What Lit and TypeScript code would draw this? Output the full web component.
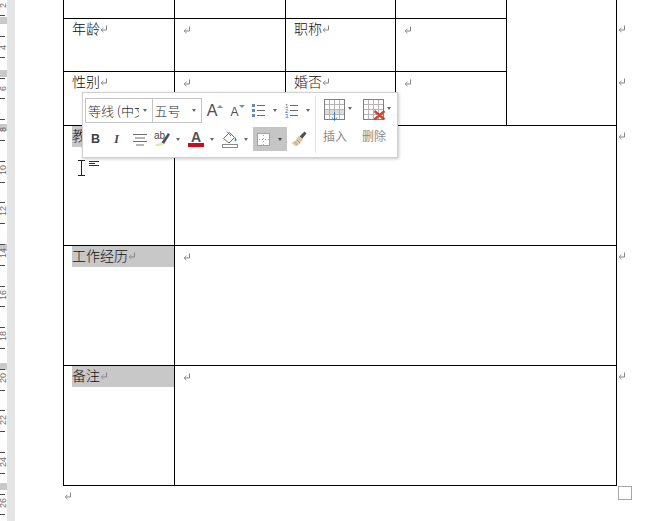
import { LitElement, html, css, svg } from "lit";
import { customElement } from "lit/decorators.js";

const TICKS = Array.from({ length: 25 }, (_, i) => Math.round(15.2 + 20.8 * i));
const NUMBERS: [string, number][] = [
  ["2", 5], ["4", 47], ["6", 88], ["8", 129], ["10", 170], ["12", 211], ["14", 253],
  ["16", 295], ["18", 336], ["20", 378], ["22", 420], ["24", 462], ["26", 503],
];
const BLOCKS = [17, 70, 124, 244, 363, 483];

const mark = html`<svg class="mark" width="8" height="8" viewBox="0 0 8 8"><path d="M6.5 0.5V5H1.5" fill="none" stroke="#858585" stroke-width="1"/><path d="M3.5 2.8L1 5L3.5 7.2" fill="none" stroke="#999" stroke-width="1"/></svg>`;

const tableGrid = (fill: boolean) => svg`
  ${fill ? svg`<rect x="0" y="10.5" width="20" height="5" fill="#d9dedf"/>` : ""}
  <path d="M5.5 .5V20.5M10.5 .5V20.5M15.5 .5V20.5M.5 5.5H20.5M.5 10.5H20.5M.5 15.5H20.5" stroke="#b4b4b4" fill="none"/>
  <rect x=".5" y=".5" width="20" height="20" fill="none" stroke="#808080"/>`;

@customElement("app-root")
export class AppRoot extends LitElement {
  static styles = css`
    :host { display: block; width: 656px; height: 521px; overflow: hidden; background: #fff; position: relative; font-family: "Noto Sans CJK SC", "Liberation Sans", sans-serif; font-weight: 300; color: #111; }
    .shell { display: flex; height: 521px; }
    .scale { position: relative; width: 7px; flex: none; }
    .band { width: 8px; flex: none; background: #e5e5e5; }
    .tick { position: absolute; left: 0; width: 5px; height: 1px; background: #4a4a4a; }
    .block { position: absolute; left: 0; width: 7px; height: 7px; background: #c9c9c9; }
    .num { position: absolute; left: 0; width: 7px; height: 14px; display: flex; align-items: center; justify-content: center; writing-mode: vertical-rl; transform: rotate(180deg); font: 9px/7px "Liberation Sans", sans-serif; color: #6a6a6a; }
    .page { flex: 1; padding-left: 48px; }
    .table { display: grid; grid-template-columns: 112px 111px 110px 111px 110px 23px; grid-template-rows: 19px 53px 54px 120px 120px 120px; width: 577px; }
    .cell { box-sizing: border-box; border-right: 1px solid #000; border-bottom: 1px solid #000; font-size: 14px; line-height: 21px; padding-left: 8px; overflow: hidden; }
    .first { border-left: 1px solid #000; }
    .wide { grid-column: span 4; }
    .photo { grid-column: 5; grid-row: 1 / span 3; }
    .end { padding: 6px 0 0 1px; }
    .label { display: flex; align-items: center; box-sizing: border-box; height: 21px; padding-bottom: 2px; }
    .shade { background: #c8c8c8; }
    .empty { padding-top: 7px; }
    .mark { display: block; flex: none; }
    .after { padding: 6px 0 0 1px; }
    .handle { position: absolute; left: 618px; top: 486px; width: 12px; height: 12px; border: 1px solid #a6a6a6; background: #fff; }
    .cursor { position: absolute; left: 78px; top: 160px; }
    .popup { position: absolute; left: 82px; top: 92px; box-sizing: border-box; width: 316px; height: 66px; background: #fff; border: 1px solid #d0d0d0; box-shadow: 1px 1px 3px rgba(0,0,0,.22); display: flex; padding: 2px 0 2px 2px; }
    .left { width: 228px; flex: none; display: flex; flex-direction: column; padding-top: 3px; }
    .row { display: flex; align-items: center; }
    .row.one { height: 25px; }
    .row.two { height: 24px; margin-top: 4px; }
    .box { box-sizing: border-box; height: 25px; border: 1px solid #c4c4c4; display: flex; align-items: center; justify-content: space-between; font-size: 13px; color: #2c2c2c; overflow: hidden; white-space: nowrap; }
    .box.font { width: 69px; padding: 0 5px 0 2px; }
    .box.size { width: 50px; margin-left: -1px; padding: 0 5px 0 1px; }
    .box span { overflow: hidden; flex: none; }
    .font span { width: 51px; }
    .chev { width: 0; height: 0; flex: none; border-left: 2.5px solid transparent; border-right: 2.5px solid transparent; border-top: 3px solid #666; }
    .btn { box-sizing: border-box; height: 24px; display: flex; align-items: center; flex: none; }
    .center { justify-content: center; }
    .w21 { width: 21px; } .w25 { width: 25px; } .w23 { width: 23px; padding-left: 4px; }
    .split { padding-left: 2px; }
    .split .chev { margin-left: 6px; }
    .w34 { width: 34px; } .w33 { width: 33px; }
    .hover { background: #c5c5c5; padding-left: 4px; }
    .hover .chev { margin-left: 8px; border-top-color: #444; }
    .b { font: bold 12.5px "Liberation Sans", sans-serif; color: #404040; }
    .i { font: italic bold 13px "Liberation Serif", serif; color: #505050; }
    .grow { width: 22px; height: 25px; margin-left: 2px; }
    .shrink { width: 23px; height: 25px; }
    .a-big { font: 16px "Liberation Sans", sans-serif; color: #505050; }
    .a-small { font: 12px "Liberation Sans", sans-serif; color: #505050; padding-top: 3px; }
    .caret { width: 0; height: 0; border-left: 3px solid transparent; border-right: 3px solid transparent; margin-bottom: 9px; }
    .up { border-bottom: 3px solid #6d93b5; }
    .down { border-top: 3px solid #6d93b5; }
    .list { width: 32px; height: 25px; padding-left: 3px; }
    .list .chev { margin-left: 7.5px; }
    .list.num-list { width: 31px; margin-left: 1px; }
    .color { display: flex; flex-direction: column; align-items: center; width: 16px; font: bold 14px/12px "Liberation Sans", sans-serif; color: #505050; }
    .color i { display: block; width: 16px; height: 4px; background: #cf0a1c; }
    .sep { width: 1px; flex: none; margin: 1px 0 2px 2px; background: #e2e2e2; }
    .tool { width: 39px; flex: none; display: flex; flex-direction: column; padding-top: 4px; font-size: 12px; font-weight: 400; color: #8a8a8a; }
    .first-tool { margin-left: 2px; }
    .tool .top { display: flex; align-items: center; height: 22px; padding-left: 6px; }
    .tool .top .chev { margin-left: 3px; margin-top: -3px; }
    .tool .top .tight { margin-left: 0; }
    .tool .name { margin-top: 6px; line-height: 18px; width: 34px; text-align: center; }
  `;

  render() {
    return html`
      <div class="shell">
        <div class="scale">
          ${BLOCKS.map((y) => html`<div class="block" style="top:${y}px"></div>`)}
          ${TICKS.map((y) => html`<div class="tick" style="top:${y}px"></div>`)}
          ${NUMBERS.map(([n, y]) => html`<div class="num" style="top:${y - 7}px">${n}</div>`)}
        </div>
        <div class="band"></div>
        <div class="page">
          <div class="table">
            <div class="cell first"></div><div class="cell"></div><div class="cell"></div><div class="cell"></div>
            <div class="cell photo"></div><div></div>

            <div class="cell first"><div class="label">年龄${mark}</div></div>
            <div class="cell empty">${mark}</div>
            <div class="cell"><div class="label">职称${mark}</div></div>
            <div class="cell empty">${mark}</div>
            <div class="end">${mark}</div>

            <div class="cell first"><div class="label">性别${mark}</div></div>
            <div class="cell empty">${mark}</div>
            <div class="cell"><div class="label">婚否${mark}</div></div>
            <div class="cell empty">${mark}</div>
            <div class="end">${mark}</div>

            <div class="cell first"><div class="label shade">教</div></div>
            <div class="cell wide empty">${mark}</div>
            <div class="end">${mark}</div>

            <div class="cell first"><div class="label shade">工作经历${mark}</div></div>
            <div class="cell wide empty">${mark}</div>
            <div class="end">${mark}</div>

            <div class="cell first"><div class="label shade">备注${mark}</div></div>
            <div class="cell wide empty">${mark}</div>
            <div class="end">${mark}</div>
          </div>
          <div class="after">${mark}</div>
        </div>
      </div>

      <div class="handle"></div>

      <svg class="cursor" width="22" height="16" viewBox="0 0 22 16">
        <path d="M0 .5H7M0 15.500H7M3.500 .5V15.500" fill="none" stroke="#222"/>
        <path d="M11 1.500H21M11 3.500H17M11 5.500H21" fill="none" stroke="#333"/>
      </svg>

      <div class="popup">
        <div class="left">
          <div class="row one">
            <div class="box font"><span>等线 (中文</span><div class="chev"></div></div>
            <div class="box size"><span>五号</span><div class="chev"></div></div>
            <div class="btn grow center"><span class="a-big">A</span><div class="caret up"></div></div>
            <div class="btn shrink center"><span class="a-small">A</span><div class="caret down"></div></div>
            <div class="btn list">
              <svg width="13" height="15" viewBox="0 0 13 15">
                <path d="M0 1h3v3H0zM0 6h3v3H0zM0 11h3v3H0z" fill="#5f8cb5"/>
                <path d="M5 2.500h8M5 7.500h8M5 12.500h8" stroke="#6a6a6a"/>
              </svg>
              <div class="chev"></div>
            </div>
            <div class="btn list num-list">
              <svg width="13" height="15" viewBox="0 0 13 15">
                <text x="0" y="5" font-size="6" font-family="Liberation Sans" fill="#2f6cae">1</text>
                <text x="0" y="10" font-size="6" font-family="Liberation Sans" fill="#2f6cae">2</text>
                <text x="0" y="15" font-size="6" font-family="Liberation Sans" fill="#2f6cae">3</text>
                <path d="M5 2.500h8M5 7.500h8M5 12.500h8" stroke="#6a6a6a"/>
              </svg>
              <div class="chev"></div>
            </div>
          </div>
          <div class="row two">
            <div class="btn w21 center"><span class="b">B</span></div>
            <div class="btn w21 center"><span class="i">I</span></div>
            <div class="btn w25 center">
              <svg width="14" height="13" viewBox="0 0 14 13"><path d="M0 1.500h14M2 5h10M0 8.500h14M3 12h8" stroke="#6e6e6e"/></svg>
            </div>
            <div class="btn w34 split">
              <svg width="16" height="16" viewBox="0 0 16 16">
                <text x="0" y="8" font-size="10" font-family="Liberation Sans" fill="#4a4a4a">ab</text>
                <path d="M7.500 11.500L14 2L16 3.500L10 13z" fill="#505050"/>
                <path d="M1 13.500L7.500 11.500L10 13L7 15H2z" fill="#ece6ae"/>
              </svg>
              <div class="chev"></div>
            </div>
            <div class="btn w34 split">
              <div class="color">A<i></i></div>
              <div class="chev"></div>
            </div>
            <div class="btn w33 split">
              <svg width="16" height="17" viewBox="0 0 16 17">
                <path d="M1.500 7.500L7.500 1.500L12.500 6.500L7 12z" fill="#fff" stroke="#6f6f6f"/>
                <path d="M5 .5L9 5" stroke="#6f6f6f"/>
                <path d="M13 6c1.300 1.800 2.300 2.800 1.300 4c-1 .8-2.200 0-1.600-1.500z" fill="#4f81ad"/>
                <rect x=".5" y="13.500" width="15" height="3" fill="#fff" stroke="#8a8a8a"/>
              </svg>
              <div class="chev"></div>
            </div>
            <div class="btn w34 split hover">
              <svg width="13" height="13" viewBox="0 0 13 13">
                <rect width="13" height="13" fill="#fff"/>
                <rect x=".5" y=".5" width="12" height="12" fill="none" stroke="#444" stroke-dasharray="1 1"/>
                <path d="M6.500 2v10M2 6.500h10" stroke="#aaa" stroke-dasharray="1 2"/>
              </svg>
              <div class="chev"></div>
            </div>
            <div class="btn w23">
              <svg width="16" height="16" viewBox="0 0 16 16">
                <path d="M8.500 5.500L13.500 .5L15.500 2.500L11 8z" fill="#505050"/>
                <path d="M8 4.500L12 8.500L9 12.500L5 15.500L.5 12L4.500 9.500z" fill="#d8c9a8"/>
                <path d="M3.500 11l3 3M6 9l3 3" stroke="#b7a27c"/>
              </svg>
            </div>
          </div>
        </div>
        <div class="sep"></div>
        <div class="tool first-tool">
          <div class="top">
            <svg width="21" height="22" viewBox="0 0 21 22">
              ${tableGrid(true)}
              <path d="M10.500 13V21M8 18.500L10.500 21.500L13 18.500" fill="none" stroke="#3d7ab5"/>
            </svg>
            <div class="chev"></div>
          </div>
          <div class="name">插入</div>
        </div>
        <div class="tool">
          <div class="top">
            <svg width="24" height="22" viewBox="0 0 24 22">
              ${tableGrid(false)}
              <path d="M11.500 12L21.500 20.500M21.500 12L11.500 20.500" stroke="#d0432c" stroke-width="2.400"/>
            </svg>
            <div class="chev tight"></div>
          </div>
          <div class="name">删除</div>
        </div>
      </div>
    `;
  }
}
